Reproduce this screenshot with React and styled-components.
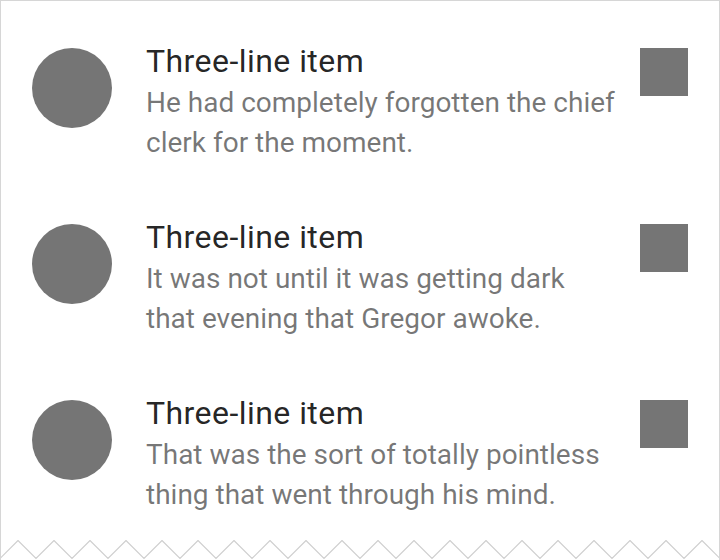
import React from "react";
import styled, { createGlobalStyle } from "styled-components";

const Global = createGlobalStyle`
  html, body { margin: 0; padding: 0; background: #fff; }
  body { font-family: Roboto, "Noto Sans", sans-serif; -webkit-font-smoothing: antialiased; }
`;

const Frame = styled.div`
  position: relative;
  box-sizing: border-box;
  width: 720px;
  height: 560px;
  border: 1px solid #d6d6d6;
  border-bottom: none;
  overflow: hidden;
  background: #fff;
`;

const List = styled.ul`
  list-style: none;
  margin: 0;
  padding: 15px 0 0;
`;

const Item = styled.li`
  display: flex;
  align-items: flex-start;
  height: 176px;
  box-sizing: border-box;
  padding: 32px 31px 0 31px;
`;

const Avatar = styled.div`
  flex: none;
  width: 80px;
  height: 80px;
  border-radius: 50%;
  background: #757575;
`;

const Text = styled.div`
  flex: 1;
  margin-left: 34px;
  margin-top: -9px;
  min-width: 0;
`;

const Primary = styled.div`
  font-size: 32px;
  line-height: 44px;
  letter-spacing: 0.45px;
  color: rgba(0, 0, 0, 0.87);
`;

const Secondary = styled.div`
  font-size: 28px;
  line-height: 40px;
  color: rgba(0, 0, 0, 0.54);
  max-width: 470px;
`;

const Meta = styled.div`
  flex: none;
  width: 48px;
  height: 48px;
  background: #757575;
  margin-left: 16px;
`;

const Zigzag = styled.svg`
  position: absolute;
  left: -1px;
  bottom: 0;
  display: block;
`;

const items = [
  ["He had completely forgotten the chief", "clerk for the moment."],
  ["It was not until it was getting dark", "that evening that Gregor awoke."],
  ["That was the sort of totally pointless", "thing that went through his mind."],
];

function ZigzagEdge() {
  const pts = [];
  for (let x = 0; x <= 720; x += 18) {
    pts.push(`${x},${(x / 18) % 2 === 0 ? 18.5 : 0.5}`);
  }
  const line = pts.join(" ");
  return (
    <Zigzag width="720" height="20" viewBox="0 0 720 20">
      <polygon points={`${line} 720,20 0,20`} fill="#fff" />
      <polyline points={line} fill="none" stroke="#cfcfcf" strokeWidth="1.2" />
    </Zigzag>
  );
}

export default function App() {
  return (
    <>
      <Global />
      <Frame>
        <List>
          {items.map(([a, b], i) => (
            <Item key={i}>
              <Avatar />
              <Text>
                <Primary>Three-line item</Primary>
                <Secondary>
                  {a}
                  <br />
                  {b}
                </Secondary>
              </Text>
              <Meta />
            </Item>
          ))}
        </List>
        <ZigzagEdge />
      </Frame>
    </>
  );
}
